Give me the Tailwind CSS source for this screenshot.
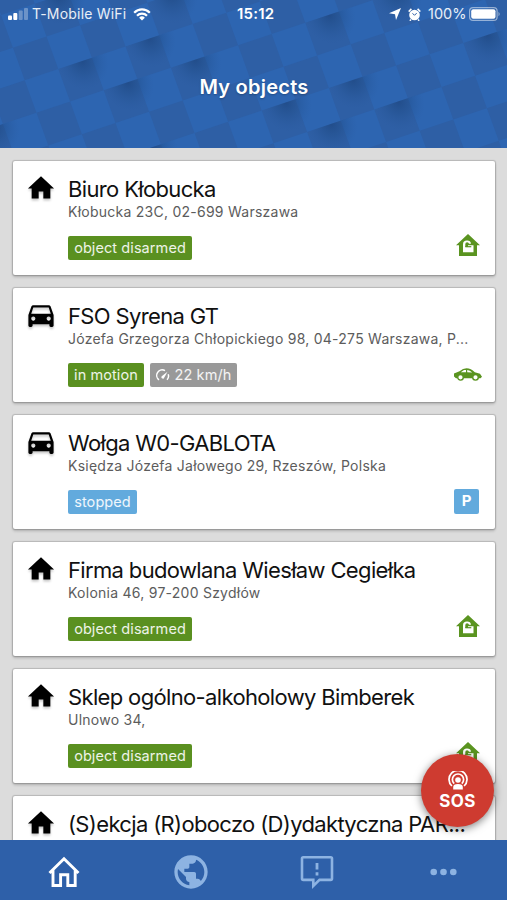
<!DOCTYPE html>
<html lang="en">
<head>
<meta charset="utf-8">
<title>My objects</title>
<script src="https://cdn.jsdelivr.net/npm/@tailwindcss/browser@4"></script>
</head>
<body class="bg-[#dcdcdc] overflow-hidden">
<svg class="hidden">
  <defs>
    <symbol id="home" viewBox="0 0 24 24"><path d="M10 20.500v-6h4v6h6v-8.500h3.200L12 1.500.8 12H4v8.500z"/></symbol>
    <symbol id="car" viewBox="2 1.300 20 20"><path d="M18.92 5.01C18.72 4.42 18.16 4 17.5 4h-11c-.66 0-1.21.42-1.42 1.01L3 11v7.500c0 .55.45 1 1 1h1c.55 0 1-.45 1-1V17.500h12v1c0 .55.45 1 1 1h1c.55 0 1-.45 1-1V11l-2.080-5.990zM6.500 15c-.83 0-1.500-.67-1.500-1.500S5.670 12 6.500 12s1.500.67 1.500 1.500S7.330 15 6.500 15zm11 0c-.83 0-1.500-.67-1.500-1.500s.67-1.500 1.500-1.500 1.500.67 1.500 1.500-.67 1.500-1.500 1.500zM5 10l1.500-4.500h11L19 10H5z"/></symbol>
    <symbol id="unlocked" viewBox="0 0 24 22"><path d="M12 0 0 11.200h3V22h18V11.200h3z" fill="#5a9420"/><path d="M7 18.200V10.200Q7 6.500 11 6.500q3.700 0 4 3.300h-2q-.2-1.500-1.900-1.500Q9.300 8.300 9.300 10.200V13H12V11.300h5.500v6.900z" fill="#fff"/><path d="M9.300 12.700h6" stroke="#5a9420" stroke-width="1.200"/></symbol>
  </defs>
</svg>
<div class="relative flex h-[900px] w-[507px] flex-col overflow-hidden font-['Inter',sans-serif]">
  <header class="relative h-[148px] shrink-0 overflow-hidden bg-[#2d65b1] text-white">
    <svg class="absolute inset-0" width="507" height="148">
      <defs>
        <radialGradient id="shade" gradientUnits="userSpaceOnUse" cx="0" cy="0" r="1" gradientTransform="translate(.72 0) scale(.72 .85)"><stop offset="0" stop-color="#1d4680" stop-opacity=".72"/><stop offset=".45" stop-color="#204d89" stop-opacity=".4"/><stop offset="1" stop-color="#28579b" stop-opacity="0"/></radialGradient>
        <path id="fold" d="M0 0h1.450v.9H.2z" fill="url(#shade)"/>
      </defs>
      <g transform="matrix(33.6 -11.25 11.8 32.6 58.3 69)">
        <path d="M-7-2.500H16M-8-1.500H16M-7-.5H16M-8 .5H16M-7 1.500H16M-8 2.500H16M-7 3.500H16M-8 4.500H16M-7 5.500H16M-8 6.500H16" fill="none" stroke="#2e5fa5" stroke-width="1" stroke-dasharray="1 1"/>
        <use href="#fold"/><use href="#fold" x="2"/><use href="#fold" x="1" y="1"/><use href="#fold" x="3" y="1"/><use href="#fold" x="7" y="1"/><use href="#fold" x="11" y="3"/><use href="#fold" x="7" y="3"/><use href="#fold" x="8" y="4"/><use href="#fold" x="6" y="4"/><use href="#fold" x="5" y="3"/><use href="#fold" x="-3" y="1"/><use href="#fold" x="1" y="3"/><use href="#fold" y="-2"/><use href="#fold" x="3" y="-1"/><use href="#fold" x="9" y="1"/>
      </g>
    </svg>
    <div class="relative flex h-[28px] items-center leading-none">
      <svg class="ml-[8px]" width="20" height="12" fill="#fff"><rect y="7.500" width="4" height="4.500" rx="1"/><rect x="5.300" y="5" width="4" height="7" rx="1"/><g opacity=".3"><rect x="10.700" y="2.500" width="4" height="9.500" rx="1"/><rect x="16" width="4" height="12" rx="1"/></g></svg>
      <span class="ml-[4px] w-[101px] whitespace-nowrap text-[14px] leading-[20px] tracking-[0.2px] text-white/90">T-Mobile WiFi</span>
      <svg width="18" height="13" viewBox="0 0 18 13" fill="none" stroke="#fff" stroke-width="2.200"><path d="M1.200 4.700a11 11 0 0 1 15.600 0M4 7.700a7 7 0 0 1 10 0"/><path d="M9 12.500 6.100 9.800a4.100 4.100 0 0 1 5.800 0z" fill="#fff" stroke="none"/></svg>
      <span class="ml-[86px] w-[38px] whitespace-nowrap text-[15px] leading-[20px] font-semibold tracking-[0.2px]">15:12</span>
      <svg class="ml-[114px]" width="12" height="12"><path d="M12 0 7 12 6 6.300 0 5.200z" fill="#fff"/></svg>
      <svg class="ml-[7px]" width="13" height="13" viewBox="0 0 13 13"><circle cx="6.500" cy="7" r="5.300" fill="#fff"/><path d="M.7 3.600 3.400.9M12.300 3.600 9.600.9M3 11.500l-1.200 1.200M10 11.500l1.200 1.200" stroke="#fff" stroke-width="1.500"/><path d="M4.500 5.300 6.500 7.300 8.700 5.100" fill="none" stroke="#2e5fa5" stroke-width="1"/></svg>
      <span class="ml-[7px] w-[38px] whitespace-nowrap text-[14.500px] leading-[20px] text-white/90">100%</span>
      <svg class="ml-[3px]" width="32" height="14"><rect x=".6" y=".6" width="27.500" height="12.800" rx="3.500" fill="none" stroke="#fff" stroke-opacity=".5" stroke-width="1.200"/><rect x="2.200" y="2.200" width="24.300" height="9.600" rx="2" fill="#fff"/><path d="M29.500 4.700q2.400 2.300 0 4.600z" fill="#fff" opacity=".5"/></svg>
    </div>
    <h1 class="relative mt-[46px] pl-[1px] text-center text-[20px] font-semibold leading-[26px] tracking-[0.25px] [text-shadow:0_1px_2px_rgba(0,0,0,.25)]">My objects</h1>
  </header>

  <main id="list" class="flex h-[692px] shrink-0 flex-col gap-[13px] overflow-hidden pt-[13px] pr-[12px] pl-[13px]"></main>

  <nav class="flex h-[60px] shrink-0 items-center bg-[#2e60a9] pt-[4px] pl-[1px]">
    <div class="flex flex-1 justify-center"><svg width="34" height="34" viewBox="0 0 34 34" fill="none" stroke="#fff" stroke-width="2.900"><path d="M2.500 18 17 3.700 31.500 18M6 15v15.500h7.600V19.800h7.200v10.700h7.400V15"/></svg></div>
    <div class="flex flex-1 justify-center"><svg class="h-[40px] w-[40px] fill-[#8db3e2]" viewBox="0 0 24 24"><path d="M12 2C6.480 2 2 6.480 2 12s4.480 10 10 10 10-4.480 10-10S17.520 2 12 2zm-1 17.930c-3.950-.49-7-3.850-7-7.930 0-.62.080-1.210.21-1.790L9 15v1c0 1.100.9 2 2 2v1.930zm6.900-2.540c-.26-.81-1-1.390-1.900-1.390h-1v-3c0-.55-.45-1-1-1H8v-2h2c.55 0 1-.45 1-1V7h2c1.100 0 2-.9 2-2v-.41c2.930 1.190 5 4.060 5 7.410 0 2.080-.8 3.970-2.100 5.390z"/></svg></div>
    <div class="flex flex-1 justify-center"><svg width="34" height="34" viewBox="0 0 34 34" fill="none" stroke="#8db3e2" stroke-width="2.600"><path d="M3.300 2.300h27.400q1.300 0 1.300 1.300v20q0 1.300-1.300 1.300H19.500l-6.200 6v-6h-10Q2 24.900 2 23.600v-20q0-1.300 1.300-1.300z"/><path d="M17 8v6.500M17 17.200v3.300" stroke-width="2.800"/></svg></div>
    <div class="flex flex-1 justify-center"><svg width="27" height="8" fill="#8db3e2"><circle cx="3.700" cy="4" r="3.300"/><circle cx="13.500" cy="4" r="3.300"/><circle cx="23.300" cy="4" r="3.300"/></svg></div>
  </nav>

  <button class="absolute top-[754px] left-[421px] flex h-[73px] w-[73px] flex-col items-center rounded-full bg-[#ce3b30] pt-[17px] text-white shadow-[0_2px_9px_rgba(0,0,0,0.5)]">
    <svg width="20" height="19" viewBox="0 0 20 19" fill="none" stroke="#fff" stroke-width="1.700"><path d="M3.900 15A9 9 0 1 1 16.100 15M6.200 12.700a5.600 5.600 0 1 1 7.600 0"/><circle cx="10" cy="9" r="2.800" fill="#fff" stroke="none"/><path d="M5.200 18.500V16q0-3 4.800-3t4.800 3v2.500z" fill="#fff" stroke="none"/></svg>
    <span class="text-[17px] font-bold leading-[22px] tracking-[0.3px]">SOS</span>
  </button>
</div>
<script>
const objects = [
  {icon:'home', title:'Biuro Kłobucka', sub:'Kłobucka 23C, 02-699 Warszawa', state:'disarmed'},
  {icon:'car', title:'FSO Syrena GT', sub:'Józefa Grzegorza Chłopickiego 98, 04-275 Warszawa, P...', state:'motion'},
  {icon:'car', title:'Wołga W0-GABLOTA', sub:'Księdza Józefa Jałowego 29, Rzeszów, Polska', state:'stopped'},
  {icon:'home', title:'Firma budowlana Wiesław Cegiełka', sub:'Kolonia 46, 97-200 Szydłów', state:'disarmed'},
  {icon:'home', title:'Sklep ogólno-alkoholowy Bimberek', sub:'Ulnowo 34,', state:'disarmed'},
  {icon:'home', title:'(S)ekcja (R)oboczo (D)ydaktyczna PAR...'}
];
const badge = {
  disarmed: '<span class="flex h-[24px] w-[124px] items-center justify-center rounded-[2px] bg-[#5a9020]">object disarmed</span>',
  motion: '<span class="flex h-[24px] w-[76px] items-center justify-center rounded-[2px] bg-[#5a9020]">in motion</span><span class="flex h-[24px] w-[87px] items-center justify-center gap-[5px] rounded-[2px] bg-[#999]"><svg width="14" height="13" viewBox="0 0 14 13" fill="none" stroke="#fff" stroke-width="1.500"><path d="M9 1.600A5.500 5.500 0 0 0 3 10.800M12.200 5.200A5.500 5.500 0 0 1 11 10.800"/><path d="M6 9.300a1.300 1.300 0 0 1 0-2.200L11.500 2.800 8 8.900a1.300 1.300 0 0 1-2 .4z" fill="#fff" stroke="none"/></svg>22 km/h</span>',
  stopped: '<span class="flex h-[24px] w-[69px] items-center justify-center rounded-[2px] bg-[#62aadd]">stopped</span>'
};
const status = {
  disarmed: '<svg class="mr-[5px] mb-[4px]" width="24" height="22"><use href="#unlocked"/></svg>',
  motion: '<svg class="mr-[3px] mb-[6px]" width="28" height="13" viewBox="0 0 28 13"><path d="M0 5.600 5.500 3.200Q9 .2 12.500.2q4.500 0 8.300 4.100l5.200 1.500 2 2.900-1.500 1.600H2L0 8.500z" fill="#5a9420"/><path d="M6.800 4.300 10 1.900h2v2.400zM13.200 1.900q2.700.3 5 2.500l-5-.1z" fill="#fff"/><g fill="#fff" stroke="#5a9420" stroke-width="1.400"><circle cx="6.500" cy="9.300" r="2.800"/><circle cx="21.500" cy="9.300" r="2.800"/></g></svg>',
  stopped: '<span class="mr-[6px] flex h-[25px] w-[25px] items-center justify-center rounded-[2px] bg-[#62aadd] text-[15px] font-bold text-white">P</span>'
};
document.getElementById('list').innerHTML = objects.map(o => `
  <article class="flex h-[114px] shrink-0 rounded-[2px] bg-white pt-[11px] pl-[14px] shadow-[0_0_1px_1px_rgba(0,0,0,0.17),0_2px_3px_rgba(0,0,0,0.2)]">
    <svg class="mt-[2px] h-[29px] w-[28px] shrink-0 fill-black drop-shadow-[0_2px_1px_rgba(0,0,0,0.22)]"><use href="#${o.icon}"/></svg>
    <div class="ml-[13px] flex min-w-0 flex-1 flex-col">
      <h2 class="h-[31px] whitespace-nowrap text-[22px] leading-[34px] tracking-[-0.65px] text-[#111]">${o.title}</h2>
      ${o.state ? `<p class="h-[19px] whitespace-nowrap text-[14px] leading-[18px] tracking-[0.250px] text-[#5c5c5c]">${o.sub}</p>
      <div class="flex h-[50px] items-end justify-between pr-[10px] pb-[12px]">
        <div class="flex gap-[6px] self-start pt-[14px] text-[14.500px] leading-none tracking-[0.08px] text-white/90">${badge[o.state]}</div>
        ${status[o.state]}
      </div>` : ''}
    </div>
  </article>`).join('');
</script>
</body>
</html>
